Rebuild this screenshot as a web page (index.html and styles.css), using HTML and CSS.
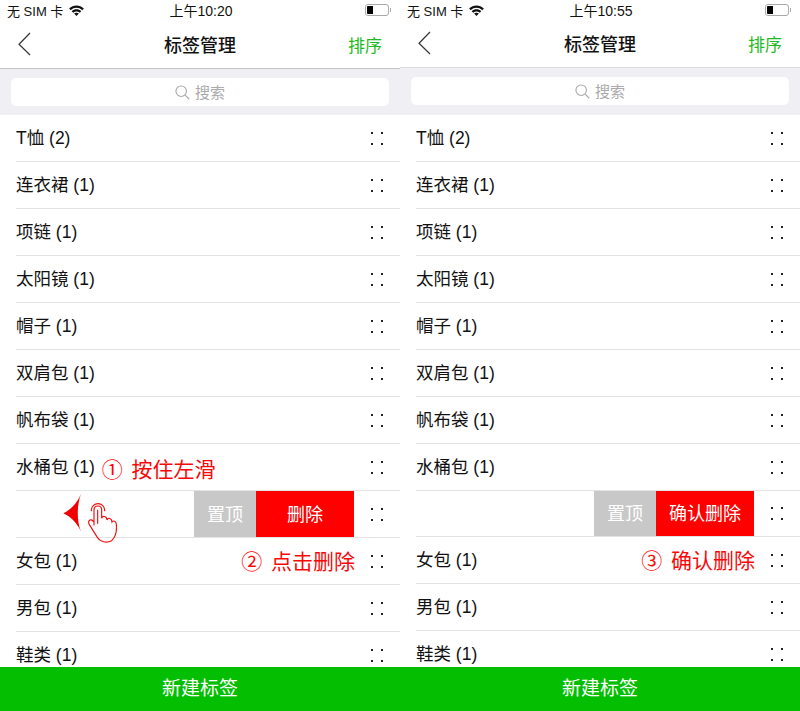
FILE: index.html
```html
<!DOCTYPE html>
<html lang="zh-CN">
<head>
    <meta charset="UTF-8">
    <meta name="viewport" content="width=device-width, initial-scale=1.0">
    <title>标签管理</title>
    <link rel="stylesheet" href="styles.css">
</head>
<body>
    <!-- Step 1 and 2 -->
    <div class="phone">
        <div class="status-bar">
            <div class="status-left">
                <span>无 SIM 卡</span>
                <svg class="wifi" viewBox="0 0 16 12"><path d="M0 3.9C4.4 -0.6 11.6 -0.6 16 3.9L14.4 5.6C10.7 2 5.3 2 1.6 5.6Z"/><path d="M2.8 6.7C5.8 3.9 10.2 3.9 13.2 6.7L11.6 8.4C9.5 6.5 6.5 6.5 4.4 8.4Z"/><path d="M5.4 9.3C6.9 8 9.1 8 10.6 9.3L8 12Z"/></svg>
            </div>
            <div class="status-time">上午10:20</div>
            <div class="battery"><div class="battery-body"><div class="battery-fill"></div></div><div class="battery-tip"></div></div>
        </div>
        <div class="nav">
            <svg class="back" viewBox="0 0 14 24"><path d="M13 1L2 12.3L13 23"/></svg>
            <div class="nav-title">标签管理</div>
            <div class="nav-action">排序</div>
        </div>
        <div class="search-band">
            <div class="search-box">
                <svg class="search-icon" viewBox="0 0 16 16"><circle cx="6.6" cy="6.6" r="5.6"/><path d="M10.8 10.8L15.2 15.2"/></svg>
                <span class="search-text">搜索</span>
            </div>
        </div>
        <div class="list">
            <div class="row"><span class="label">T恤 (2)</span><div class="handle"><i></i><i></i><i></i><i></i></div></div>
            <div class="row"><span class="label">连衣裙 (1)</span><div class="handle"><i></i><i></i><i></i><i></i></div></div>
            <div class="row"><span class="label">项链 (1)</span><div class="handle"><i></i><i></i><i></i><i></i></div></div>
            <div class="row"><span class="label">太阳镜 (1)</span><div class="handle"><i></i><i></i><i></i><i></i></div></div>
            <div class="row"><span class="label">帽子 (1)</span><div class="handle"><i></i><i></i><i></i><i></i></div></div>
            <div class="row"><span class="label">双肩包 (1)</span><div class="handle"><i></i><i></i><i></i><i></i></div></div>
            <div class="row"><span class="label">帆布袋 (1)</span><div class="handle"><i></i><i></i><i></i><i></i></div></div>
            <div class="row">
                <span class="label">水桶包 (1)</span>
                <span class="note note-near">① 按住左滑</span>
                <div class="handle"><i></i><i></i><i></i><i></i></div>
            </div>
            <div class="row">
                <svg class="gesture" viewBox="0 0 240 165">
                    <path class="gesture-arrow" d="M40 70C62 60 82 38 93 12C80 48 80 92 93 125C82 100 62 80 40 70Z"/>
                    <path class="gesture-hand" d="M132 105L132 60C132 44 155 44 155 60L155 85C158 76 170 78 171 90C174 82 185 84 186 96C190 90 199 94 199 104C201 125 197 140 185 152C170 160 150 156 142 142L118 104C112 92 122 84 130 94"/>
                    <path class="gesture-hand" d="M124 62C124 34 164 34 164 62M143 60L143 100"/>
                </svg>
                <div class="actions">
                    <div class="action action-top">置顶</div>
                    <div class="action action-delete">删除</div>
                </div>
                <div class="handle"><i></i><i></i><i></i><i></i></div>
            </div>
            <div class="row">
                <span class="label">女包 (1)</span>
                <span class="note note-far">② 点击删除</span>
                <div class="handle"><i></i><i></i><i></i><i></i></div>
            </div>
            <div class="row"><span class="label">男包 (1)</span><div class="handle"><i></i><i></i><i></i><i></i></div></div>
            <div class="row"><span class="label">鞋类 (1)</span><div class="handle"><i></i><i></i><i></i><i></i></div></div>
        </div>
        <div class="new-btn">新建标签</div>
    </div>

    <!-- Step 3 -->
    <div class="phone phone-right">
        <div class="status-bar">
            <div class="status-left">
                <span>无 SIM 卡</span>
                <svg class="wifi" viewBox="0 0 16 12"><path d="M0 3.9C4.4 -0.6 11.6 -0.6 16 3.9L14.4 5.6C10.7 2 5.3 2 1.6 5.6Z"/><path d="M2.8 6.7C5.8 3.9 10.2 3.9 13.2 6.7L11.6 8.4C9.5 6.5 6.5 6.5 4.4 8.4Z"/><path d="M5.4 9.3C6.9 8 9.1 8 10.6 9.3L8 12Z"/></svg>
            </div>
            <div class="status-time">上午10:55</div>
            <div class="battery"><div class="battery-body"><div class="battery-fill"></div></div><div class="battery-tip"></div></div>
        </div>
        <div class="nav">
            <svg class="back" viewBox="0 0 14 24"><path d="M13 1L2 12.3L13 23"/></svg>
            <div class="nav-title">标签管理</div>
            <div class="nav-action">排序</div>
        </div>
        <div class="search-band">
            <div class="search-box">
                <svg class="search-icon" viewBox="0 0 16 16"><circle cx="6.6" cy="6.6" r="5.6"/><path d="M10.8 10.8L15.2 15.2"/></svg>
                <span class="search-text">搜索</span>
            </div>
        </div>
        <div class="list">
            <div class="row"><span class="label">T恤 (2)</span><div class="handle"><i></i><i></i><i></i><i></i></div></div>
            <div class="row"><span class="label">连衣裙 (1)</span><div class="handle"><i></i><i></i><i></i><i></i></div></div>
            <div class="row"><span class="label">项链 (1)</span><div class="handle"><i></i><i></i><i></i><i></i></div></div>
            <div class="row"><span class="label">太阳镜 (1)</span><div class="handle"><i></i><i></i><i></i><i></i></div></div>
            <div class="row"><span class="label">帽子 (1)</span><div class="handle"><i></i><i></i><i></i><i></i></div></div>
            <div class="row"><span class="label">双肩包 (1)</span><div class="handle"><i></i><i></i><i></i><i></i></div></div>
            <div class="row"><span class="label">帆布袋 (1)</span><div class="handle"><i></i><i></i><i></i><i></i></div></div>
            <div class="row"><span class="label">水桶包 (1)</span><div class="handle"><i></i><i></i><i></i><i></i></div></div>
            <div class="row row-short">
                <div class="actions">
                    <div class="action action-top">置顶</div>
                    <div class="action action-delete">确认删除</div>
                </div>
                <div class="handle"><i></i><i></i><i></i><i></i></div>
            </div>
            <div class="row">
                <span class="label">女包 (1)</span>
                <span class="note note-far">③ 确认删除</span>
                <div class="handle"><i></i><i></i><i></i><i></i></div>
            </div>
            <div class="row"><span class="label">男包 (1)</span><div class="handle"><i></i><i></i><i></i><i></i></div></div>
            <div class="row"><span class="label">鞋类 (1)</span><div class="handle"><i></i><i></i><i></i><i></i></div></div>
        </div>
        <div class="new-btn">新建标签</div>
    </div>
</body>
</html>
```

FILE: styles.css
```css
body {
    margin: 0;
    width: 800px;
    height: 711px;
    display: flex;
    overflow: hidden;
    background: white;
    color: #111;
    font-family: "Liberation Sans", "Noto Sans CJK SC", sans-serif;
}
.phone {
    width: 400px;
    height: 711px;
    display: flex;
    flex-direction: column;
    overflow: hidden;
}
.status-bar {
    height: 22px;
    flex-shrink: 0;
    box-sizing: border-box;
    padding: 0 0 2px 7px;
    display: flex;
    align-items: center;
    position: relative;
    font-size: 13px;
}
.phone-right .status-bar {
    height: 21px;
    padding-bottom: 1px;
}
.status-left {
    display: flex;
    align-items: center;
    gap: 6px;
}
.wifi {
    width: 15px;
    height: 11px;
    fill: #111;
}
.status-time {
    position: absolute;
    left: 2px;
    right: 0;
    text-align: center;
    font-size: 14px;
}
.battery {
    margin-left: auto;
    margin-right: 9px;
    display: flex;
    align-items: center;
}
.battery-body {
    width: 20px;
    height: 8px;
    border: 1px solid #aaa;
    border-radius: 3px;
    padding: 1px;
}
.battery-fill {
    width: 6px;
    height: 8px;
    background: black;
    border-radius: 1px 0 0 1px;
}
.battery-tip {
    width: 1px;
    height: 4px;
    background: #aaa;
    margin-left: 1px;
}
.nav {
    height: 47px;
    flex-shrink: 0;
    box-sizing: border-box;
    padding: 0 18px 2px 17px;
    display: flex;
    align-items: center;
    justify-content: space-between;
    position: relative;
    border-bottom: 1px solid #c4c4c6;
}
.phone-right .nav {
    border-bottom-color: #dcdce0;
}
.back {
    width: 14px;
    height: 24px;
    fill: none;
    stroke: #333;
    stroke-width: 1.2;
}
.nav-title {
    position: absolute;
    left: 0;
    right: 0;
    text-align: center;
    font-size: 18px;
    font-weight: 500;
}
.nav-action {
    font-size: 17px;
    color: #1fb922;
}
.search-band {
    height: 46px;
    flex-shrink: 0;
    padding: 9px 11px;
    box-sizing: border-box;
    background: #efeff4;
}
.phone-right .search-band {
    height: 47px;
}
.search-box {
    height: 28px;
    background: white;
    border-radius: 5px;
    display: flex;
    align-items: center;
    justify-content: center;
    gap: 5px;
    color: #aaa;
    font-size: 15px;
}
.search-text {
    padding-bottom: 2px;
}
.search-icon {
    width: 15px;
    height: 15px;
    fill: none;
    stroke: #aaa;
    stroke-width: 1.2;
}
.list {
    flex: 1;
    min-height: 0;
    overflow: hidden;
    padding-left: 16px;
}
.row {
    height: 47px;
    box-sizing: border-box;
    border-bottom: 1px solid #e3e3e3;
    padding-right: 17px;
    display: flex;
    align-items: center;
    position: relative;
    font-size: 17.5px;
}
.row-short {
    height: 46px;
}
.label {
    white-space: nowrap;
    padding-bottom: 3px;
}
.note {
    color: #f80808;
    font-size: 21px;
    word-spacing: 3px;
    white-space: nowrap;
}
.note-near {
    margin-left: 7px;
    padding-top: 1px;
}
.note-far {
    margin-left: auto;
    margin-right: 16px;
    padding-bottom: 3px;
}
.handle {
    margin-left: auto;
    width: 12px;
    display: grid;
    grid-template-columns: 2px 2px;
    justify-content: space-between;
    row-gap: 9px;
}
.note-far + .handle {
    margin-left: 0;
}
.handle i {
    width: 2px;
    height: 2px;
    background: #222;
}
.actions {
    position: absolute;
    top: 0;
    bottom: 0;
    left: 178px;
    display: flex;
}
.action {
    display: flex;
    align-items: center;
    justify-content: center;
    box-sizing: border-box;
    padding-bottom: 3px;
    color: white;
    font-size: 18px;
}
.action-top {
    width: 62px;
    background: #c8c8c8;
}
.action-delete {
    width: 98px;
    background: #ff0000;
}
.gesture {
    position: absolute;
    left: 34px;
    top: -1px;
    width: 80px;
    height: 55px;
    z-index: 1;
}
.gesture-arrow {
    fill: #f00000;
}
.gesture-hand {
    fill: none;
    stroke: #ee1111;
    stroke-width: 3.5;
    stroke-linecap: round;
}
.new-btn {
    height: 44px;
    flex-shrink: 0;
    box-sizing: border-box;
    padding-bottom: 5px;
    background: #04be02;
    color: white;
    font-size: 19px;
    display: flex;
    align-items: center;
    justify-content: center;
}
```
